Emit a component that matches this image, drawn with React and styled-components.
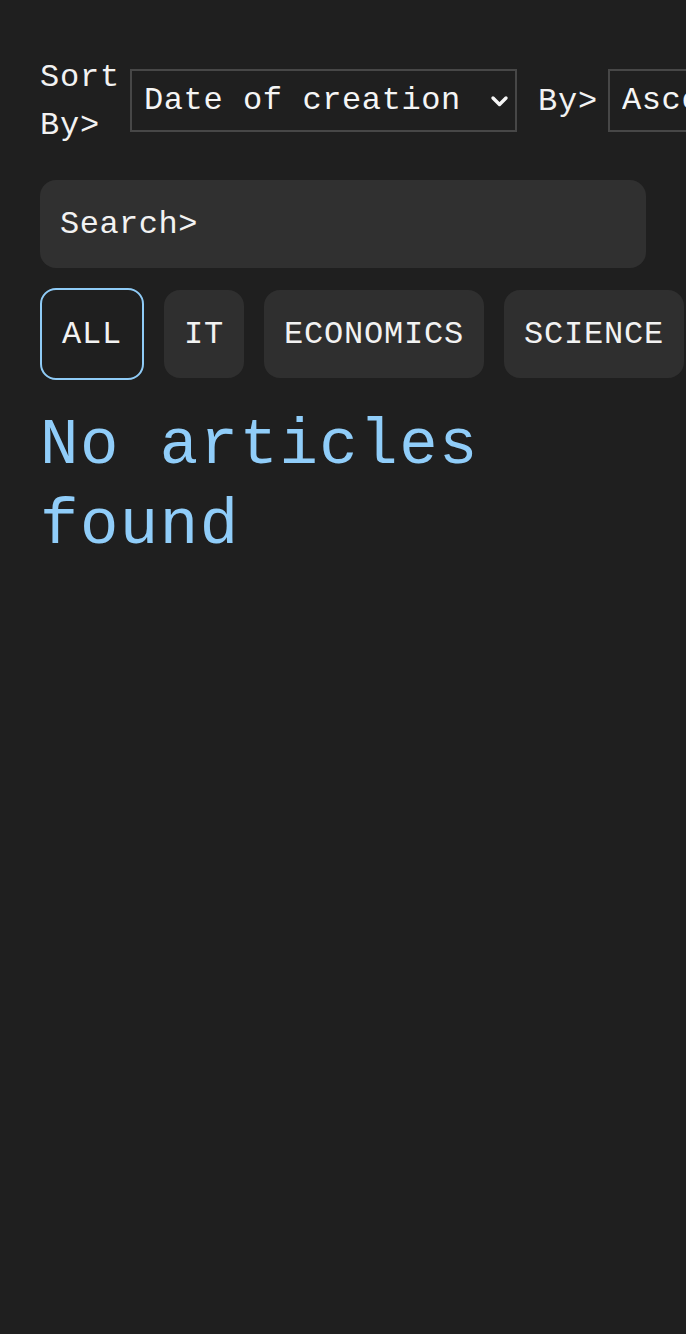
import React from "react";
import styled, { createGlobalStyle } from "styled-components";

const Global = createGlobalStyle`
  html, body {
    margin: 0;
    padding: 0;
    background: #1f1f1f;
    overflow-x: hidden;
  }
  body {
    font-family: "Liberation Mono", "DejaVu Sans Mono", monospace;
    color: #f2f2f2;
  }
`;

const Page = styled.main`
  min-height: 1334px;
  box-sizing: border-box;
  padding: 54px 0 0 40px;
  background: #1f1f1f;
`;

const SortRow = styled.div`
  display: flex;
  align-items: center;
  width: 900px;
`;

const Label = styled.label`
  flex: 0 1 auto;
  min-width: 0;
  width: ${(p) => p.$w}px;
  font-size: 32px;
  line-height: 48px;
  letter-spacing: 0.8px;
  color: #f2f2f2;
  margin-right: 10px;
`;

const SelectWrap = styled.span`
  position: relative;
  flex: 0 0 auto;
  display: inline-flex;
  margin-right: 21px;
  margin-top: -3px;
`;

const Select = styled.select`
  appearance: none;
  -webkit-appearance: none;
  box-sizing: border-box;
  width: ${(p) => p.$w}px;
  height: 63px;
  padding: 0 40px 0 12px;
  border: 2px solid #474747;
  border-radius: 0;
  background: #1f1f1f;
  color: #f5f5f5;
  font-family: "Liberation Mono", "DejaVu Sans Mono", monospace;
  font-size: 32px;
  letter-spacing: 0.6px;
  outline: none;
`;

const Chevron = styled.svg`
  position: absolute;
  right: 8px;
  top: 50%;
  width: 19px;
  height: 13px;
  margin-top: -6px;
  pointer-events: none;
`;

const Search = styled.input`
  display: block;
  box-sizing: border-box;
  width: 606px;
  height: 88px;
  margin-top: 30px;
  padding: 0 20px;
  border: none;
  border-radius: 16px;
  background: #303030;
  color: #f2f2f2;
  font-family: "Liberation Mono", "DejaVu Sans Mono", monospace;
  font-size: 32px;
  letter-spacing: 0.5px;
  outline: none;
  &::placeholder {
    color: #f2f2f2;
    opacity: 1;
  }
`;

const Tags = styled.div`
  display: flex;
  align-items: center;
  gap: 20px;
  margin-top: 20px;
  width: 680px;
`;

const Tag = styled.button`
  flex: 0 0 auto;
  box-sizing: border-box;
  height: ${(p) => (p.$active ? 92 : 88)}px;
  padding: 0 20px;
  display: flex;
  align-items: center;
  justify-content: center;
  border: ${(p) => (p.$active ? "2px solid #8fcbf6" : "none")};
  border-radius: 16px;
  background: ${(p) => (p.$active ? "#1f1f1f" : "#2f2f2f")};
  color: #f2f2f2;
  font-family: "Liberation Mono", "DejaVu Sans Mono", monospace;
  font-size: 32px;
  letter-spacing: 0.8px;
  cursor: pointer;
`;

const Empty = styled.h1`
  margin: 26px 0 0;
  width: 560px;
  font-family: "Liberation Mono", "DejaVu Sans Mono", monospace;
  font-weight: 400;
  font-size: 64px;
  line-height: 80px;
  letter-spacing: 1.5px;
  color: #90cdf9;
`;

const ChevronIcon = () => (
  <Chevron viewBox="0 0 19 13">
    <path d="M3 3 L9.5 9.5 L16 3" fill="none" stroke="#f5f5f5" strokeWidth="3.4" strokeLinecap="round" strokeLinejoin="round" />
  </Chevron>
);

const tags = ["ALL", "IT", "ECONOMICS", "SCIENCE"];

export default function App() {
  return (
    <>
      <Global />
      <Page>
        <SortRow>
          <Label $w={80}>Sort By&gt;</Label>
          <SelectWrap>
            <Select $w={387} defaultValue="date">
              <option value="date">Date of creation</option>
              <option value="title">Title</option>
            </Select>
            <ChevronIcon />
          </SelectWrap>
          <Label $w={60}>By&gt;</Label>
          <SelectWrap>
            <Select $w={240} defaultValue="asc">
              <option value="asc">Ascending</option>
              <option value="desc">Descending</option>
            </Select>
            <ChevronIcon />
          </SelectWrap>
        </SortRow>
        <Search placeholder="Search>" />
        <Tags>
          {tags.map((t, i) => (
            <Tag key={t} $active={i === 0}>
              {t}
            </Tag>
          ))}
        </Tags>
        <Empty>No articles found</Empty>
      </Page>
    </>
  );
}
